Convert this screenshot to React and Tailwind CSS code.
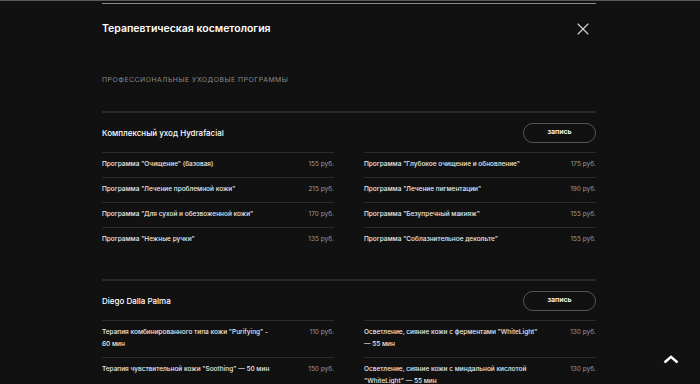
import { X } from "lucide-react";

const hydra = [
  [
    { title: 'Программа "Очищение" (базовая)', price: "155 руб." },
    { title: 'Программа "Лечение проблемной кожи"', price: "215 руб." },
    { title: 'Программа "Для сухой и обезвоженной кожи"', price: "170 руб." },
    { title: 'Программа "Нежные ручки"', price: "135 руб." },
  ],
  [
    { title: 'Программа "Глубокое очищение и обновление"', price: "175 руб." },
    { title: 'Программа "Лечение пигментации"', price: "190 руб." },
    { title: 'Программа "Безупречный макияж"', price: "155 руб." },
    { title: 'Программа "Соблазнительное декольте"', price: "155 руб." },
  ],
];

// line breaks as they fall in the layout
const diego = [
  [
    { title: 'Терапия комбинированного типа кожи "Purifying" -\n60 мин', price: "110 руб." },
    { title: 'Терапия чувствительной кожи "Soothing" — 50 мин', price: "150 руб." },
  ],
  [
    { title: 'Осветление, сияние кожи с ферментами "WhiteLight"\n— 55 мин', price: "130 руб." },
    { title: 'Осветление, сияние кожи с миндальной кислотой\n"WhiteLight" — 55 мин', price: "130 руб." },
  ],
];

function Row({ title, price }) {
  return (
    <div className="flex justify-between gap-4 border-t border-[#2c2c2c] pt-[5px] pb-[7px] text-[6.5px] leading-[12px]">
      <span className="whitespace-pre font-medium text-[#ececec]">{title}</span>
      <span className="whitespace-nowrap text-[#9a9a9a]">{price}</span>
    </div>
  );
}

function Section({ name, cols }) {
  return (
    <div className="border-t-2 border-[#2a2a2a]">
      <div className="flex h-[39px] items-center justify-between">
        <span className="text-[8px] font-medium text-white">{name}</span>
        <button className="h-[20px] w-[73px] rounded-full border border-[#555] text-[7px] font-semibold text-white">
          запись
        </button>
      </div>
      <div className="grid grid-cols-2 gap-x-[30px]">
        {cols.map((col, i) => (
          <div key={`c_${i}`} className="flex flex-col">
            {col.map((r, j) => (
              <Row key={`r_${j}`} {...r} />
            ))}
          </div>
        ))}
      </div>
    </div>
  );
}

export default function App() {
  return (
    <div
      className="relative h-[384px] w-[700px] overflow-hidden bg-[#111111] border-t border-[#5a5a5a]"
      style={{ fontFamily: "Inter, 'Liberation Sans', sans-serif" }}
    >
      <div className="ml-[102px] w-[494px]">
        <div className="mt-[2px] h-px bg-[#8a8a8a]" />
        <div className="flex h-[50px] items-center justify-between">
          <span className="text-[10.5px] font-semibold text-white">Терапевтическая косметология</span>
          <X className="mr-[3px] h-[20px] w-[20px] text-[#d6d6d6]" strokeWidth={1.3} />
        </div>
        <div className="flex h-[50px] items-center pt-[3px] text-[6.8px] uppercase tracking-[0.08em] text-[#8c8c8c]">
          Профессиональные уходовые программы
        </div>
        <div className="mt-[7px]">
          <Section name="Комплексный уход Hydrafacial" cols={hydra} />
        </div>
        <div className="mt-[27px]">
          <Section name="Diego Dalla Palma" cols={diego} />
        </div>
      </div>
      <svg
        className="absolute right-[21px] bottom-[20px]"
        width="16"
        height="9"
        viewBox="0 0 16 9"
        fill="none"
      >
        <path d="M1.5 7.5 L8 1.8 L14.5 7.5" stroke="white" strokeWidth="2.4" />
      </svg>
    </div>
  );
}
